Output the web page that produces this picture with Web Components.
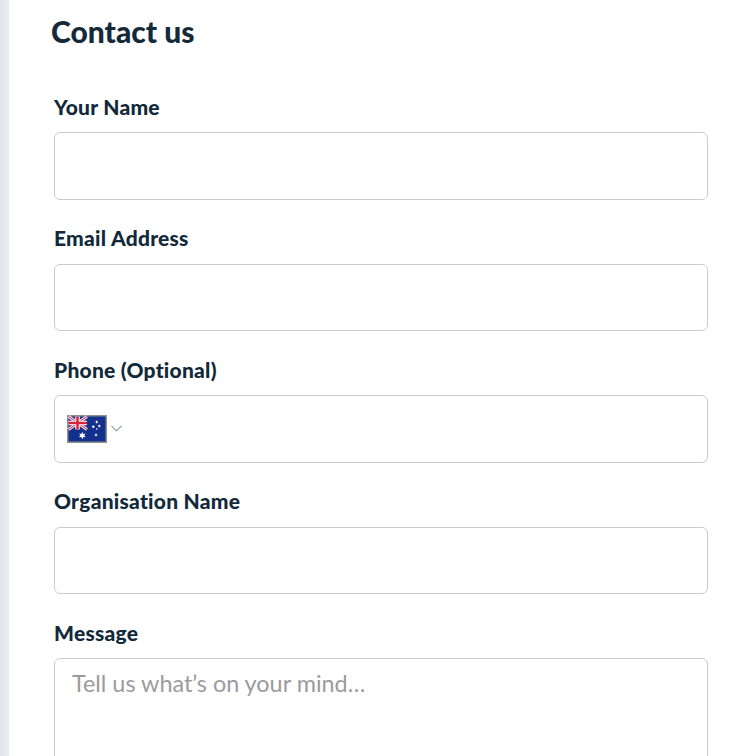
<!DOCTYPE html>
<html lang="en">
<head>
<meta charset="utf-8">
<title>Contact us</title>
<style>
html, body { margin: 0; height: 756px; overflow: hidden; background: #fff; }
body { font-family: "Lato", "Liberation Sans", sans-serif; color: #12293a; }
</style>
</head>
<body>
<contact-page>
  <contact-form heading="Contact us">
    <form-field label="Your Name"><text-box></text-box></form-field>
    <form-field label="Email Address"><text-box></text-box></form-field>
    <form-field label="Phone (Optional)"><text-box><country-picker></country-picker></text-box></form-field>
    <form-field label="Organisation Name"><text-box></text-box></form-field>
    <form-field label="Message"><text-box multiline placeholder="Tell us what’s on your mind…"></text-box></form-field>
  </contact-form>
</contact-page>
<script>
class ContactPage extends HTMLElement {
    constructor() {
        super();
        this.attachShadow({mode:"open"});
    }
    connectedCallback(){
        this.shadowRoot.innerHTML = `
        <style>
        :host { display: flex; height: 756px; overflow: hidden; }
        .edge {
            flex: 0 0 9px;
            background: linear-gradient(to right, #e2e6ec, #e9edf1);
        }
        .main { flex: 1; padding: 0 21px 0 42px; min-width: 0; }
        </style>
        <div class="edge"></div>
        <div class="main"><slot></slot></div>
        `
    }
}

class ContactForm extends HTMLElement {
    constructor() {
        super();
        this.attachShadow({mode:"open"});
    }
    connectedCallback(){
        this.shadowRoot.innerHTML = `
        <style>
        :host { display: block; }
        h1 {
            margin: 0;
            padding-top: 12px;
            height: 83px;
            box-sizing: border-box;
            font-size: 30px;
            line-height: 38px;
            font-weight: 900;
            color: #14293a;
        }
        .fields { display: flex; flex-direction: column; gap: 15px; padding-left: 3px; }
        </style>
        <h1>${this.getAttribute("heading")}</h1>
        <div class="fields"><slot></slot></div>
        `
    }
}

class FormField extends HTMLElement {
    constructor() {
        super();
        this.attachShadow({mode:"open"});
    }
    connectedCallback(){
        this.shadowRoot.innerHTML = `
        <style>
        :host { display: block; }
        label {
            display: block;
            height: 49px;
            margin: -.2px 0 .2px;
            font-size: 21px;
            letter-spacing: .25px;
            line-height: 47px;
            font-weight: 900;
            color: #12293a;
            white-space: nowrap;
        }
        </style>
        <label>${this.getAttribute("label")}</label>
        <slot></slot>
        `
    }
}

class TextBox extends HTMLElement {
    constructor() {
        super();
        this.attachShadow({mode:"open"});
    }
    connectedCallback(){
        const text = this.getAttribute("placeholder") || "";
        this.shadowRoot.innerHTML = `
        <style>
        :host {
            display: flex;
            align-items: center;
            box-sizing: border-box;
            height: 67.5px;
            padding: 0 12px;
            background: #fff;
            border: 1px solid #cbcbcb;
            border-radius: 6px;
        }
        :host([multiline]) {
            height: 200px;
            align-items: flex-start;
            padding: 8px 17px;
        }
        .hint { font-size: 23.4px; line-height: 32px; color: #9b9b9b; white-space: nowrap; }
        </style>
        <span class="hint">${text}</span>
        <slot></slot>
        `
    }
}

class CountryPicker extends HTMLElement {
    constructor() {
        super();
        this.attachShadow({mode:"open"});
    }
    connectedCallback(){
        this.shadowRoot.innerHTML = `
        <style>
        :host { display: flex; align-items: center; gap: 4px; }
        svg { display: block; }
        </style>
        <svg width="40" height="28" viewBox="0 0 40 28">
          <rect width="40" height="28" fill="#8f8f8f"/>
          <rect x="1.500" y="1.500" width="37" height="25" fill="#12308c"/>
          <path d="M1.500 1.500 20 14.500M20 1.500 1.500 14.500" stroke="#f1e4e8" stroke-width="3"/>
          <path d="M1.500 1.500 20 14.500M20 1.500 1.500 14.500" stroke="#d8233f" stroke-width="1"/>
          <path d="M10.500 1.500V14.500M1.500 8H20" stroke="#fff" stroke-width="4.500"/>
          <path d="M10.500 1.500V14.500M1.500 8H20" stroke="#d8233f" stroke-width="2.500"/>
          <path d="M15.300 16.800 16.200 19 18.500 18.500 17.200 20.500 18.800 22.200 16.400 22.100 15.300 24.200 14.200 22.100 11.800 22.200 13.400 20.500 12.100 18.500 14.400 19Z" fill="#fff"/>
          <g stroke="#fff" stroke-width="1.200" fill="none">
            <path d="M29.700 5.800V8.200M28.500 7H30.900"/>
            <path d="M26.300 10.500V12.900M25.100 11.700H27.500"/>
            <path d="M32.300 9.800V12.200M31.100 11H33.500"/>
            <path d="M29 18.800V21.200M27.800 20H30.200"/>
          </g>
          <circle cx="29.700" cy="14" r=".8" fill="#fff"/>
        </svg>
        <svg width="11" height="7" viewBox="0 0 11 7">
          <path d="M.5 .8 5.500 6 10.500 .8" fill="none" stroke="#999ea3" stroke-width="1.200"/>
        </svg>
        `
    }
}

customElements.define("contact-page", ContactPage);
customElements.define("contact-form", ContactForm);
customElements.define("form-field", FormField);
customElements.define("text-box", TextBox);
customElements.define("country-picker", CountryPicker);
</script>
</body>
</html>
